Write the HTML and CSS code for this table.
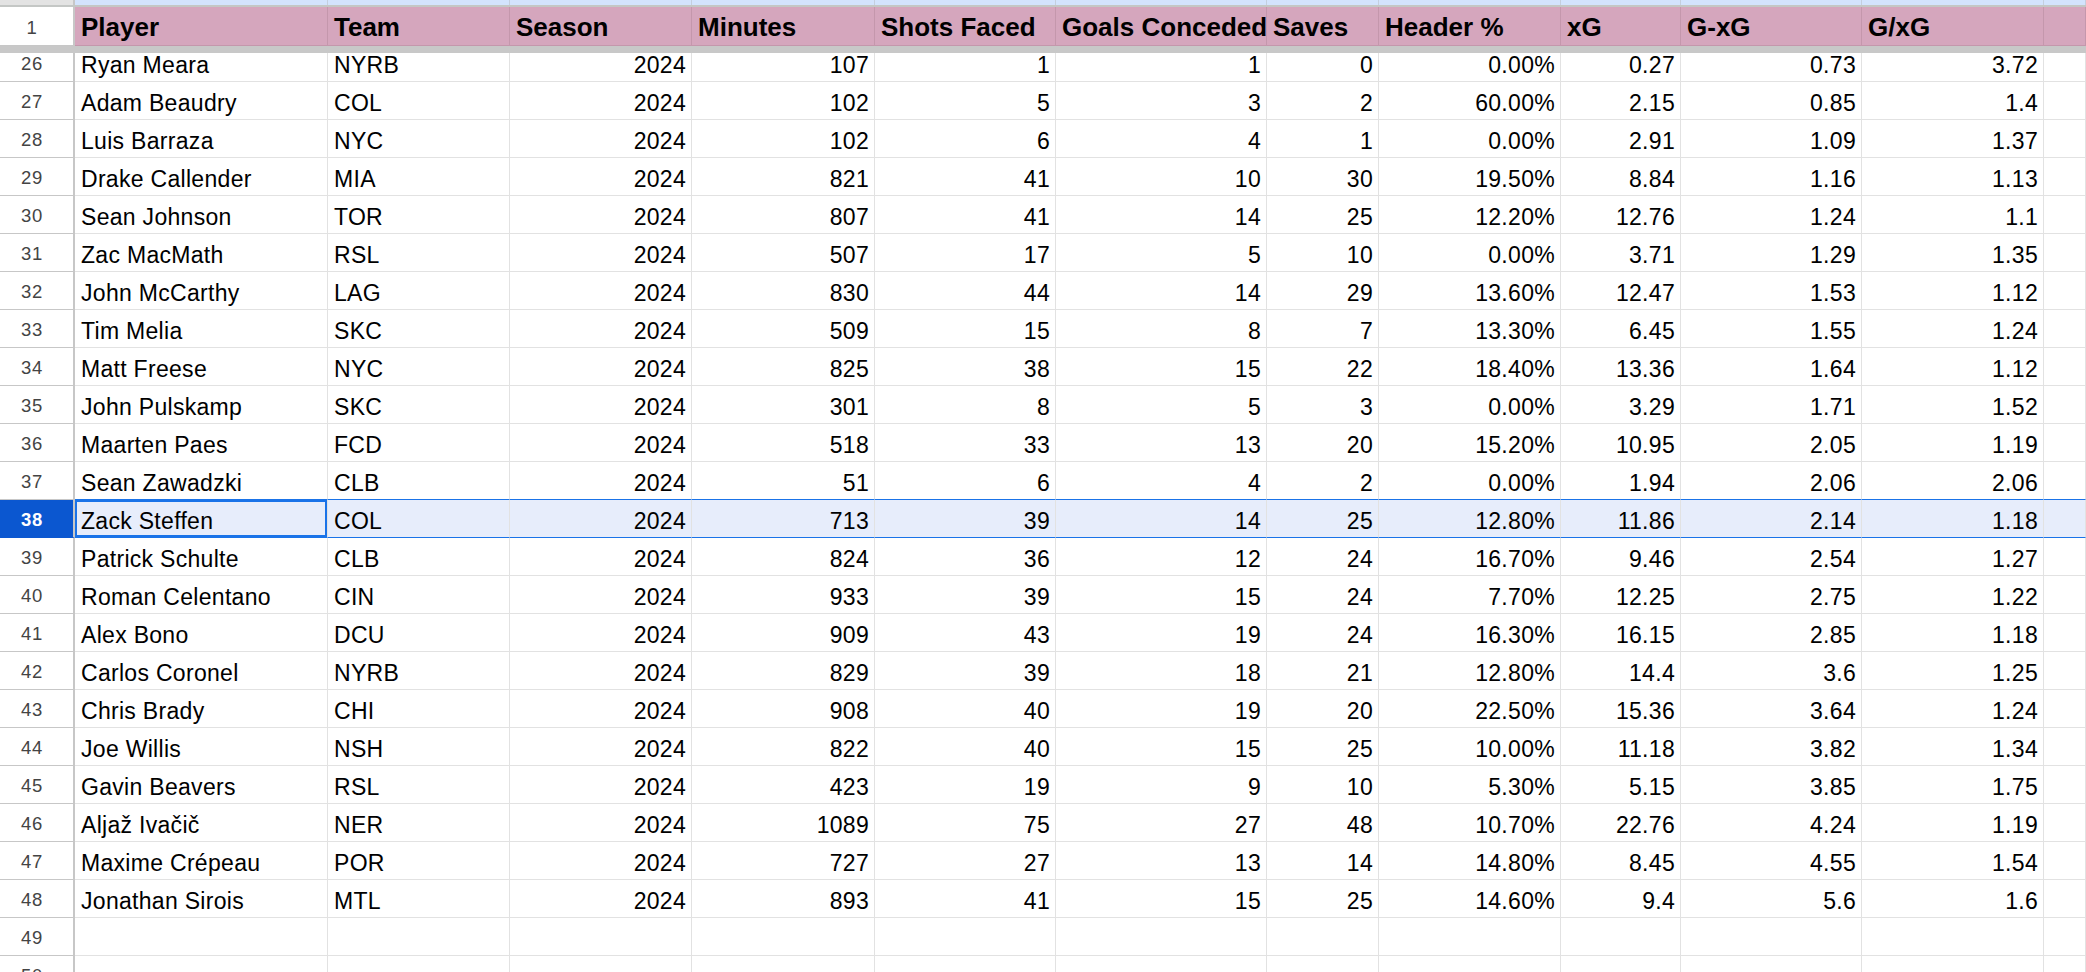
FILE: index.html
```html
<!DOCTYPE html>
<html>
<head>
<meta charset="utf-8">
<link rel="stylesheet" href="styles.css">
</head>
<body>
<div class="sheet">
  <div class="strip">
    <div class="corner"></div><div></div><div></div><div></div><div></div><div></div><div></div><div></div><div></div><div></div><div></div><div></div><div></div>
  </div>
  <div class="hdr">
    <div class="rh">1</div>
    <div class="h">Player</div>
    <div class="h">Team</div>
    <div class="h">Season</div>
    <div class="h">Minutes</div>
    <div class="h">Shots Faced</div>
    <div class="h">Goals Conceded</div>
    <div class="h">Saves</div>
    <div class="h">Header %</div>
    <div class="h">xG</div>
    <div class="h">G-xG</div>
    <div class="h">G/xG</div>
    <div class="h"></div>
  </div>
  <div class="freeze"></div>
  <div class="viewport">
    <div class="rows">
      <div class="row"><div class="rh">26</div><div class="c">Ryan Meara</div><div class="c">NYRB</div><div class="c n">2024</div><div class="c n">107</div><div class="c n">1</div><div class="c n">1</div><div class="c n">0</div><div class="c n">0.00%</div><div class="c n">0.27</div><div class="c n">0.73</div><div class="c n">3.72</div><div class="c"></div></div>
      <div class="row"><div class="rh">27</div><div class="c">Adam Beaudry</div><div class="c">COL</div><div class="c n">2024</div><div class="c n">102</div><div class="c n">5</div><div class="c n">3</div><div class="c n">2</div><div class="c n">60.00%</div><div class="c n">2.15</div><div class="c n">0.85</div><div class="c n">1.4</div><div class="c"></div></div>
      <div class="row"><div class="rh">28</div><div class="c">Luis Barraza</div><div class="c">NYC</div><div class="c n">2024</div><div class="c n">102</div><div class="c n">6</div><div class="c n">4</div><div class="c n">1</div><div class="c n">0.00%</div><div class="c n">2.91</div><div class="c n">1.09</div><div class="c n">1.37</div><div class="c"></div></div>
      <div class="row"><div class="rh">29</div><div class="c">Drake Callender</div><div class="c">MIA</div><div class="c n">2024</div><div class="c n">821</div><div class="c n">41</div><div class="c n">10</div><div class="c n">30</div><div class="c n">19.50%</div><div class="c n">8.84</div><div class="c n">1.16</div><div class="c n">1.13</div><div class="c"></div></div>
      <div class="row"><div class="rh">30</div><div class="c">Sean Johnson</div><div class="c">TOR</div><div class="c n">2024</div><div class="c n">807</div><div class="c n">41</div><div class="c n">14</div><div class="c n">25</div><div class="c n">12.20%</div><div class="c n">12.76</div><div class="c n">1.24</div><div class="c n">1.1</div><div class="c"></div></div>
      <div class="row"><div class="rh">31</div><div class="c">Zac MacMath</div><div class="c">RSL</div><div class="c n">2024</div><div class="c n">507</div><div class="c n">17</div><div class="c n">5</div><div class="c n">10</div><div class="c n">0.00%</div><div class="c n">3.71</div><div class="c n">1.29</div><div class="c n">1.35</div><div class="c"></div></div>
      <div class="row"><div class="rh">32</div><div class="c">John McCarthy</div><div class="c">LAG</div><div class="c n">2024</div><div class="c n">830</div><div class="c n">44</div><div class="c n">14</div><div class="c n">29</div><div class="c n">13.60%</div><div class="c n">12.47</div><div class="c n">1.53</div><div class="c n">1.12</div><div class="c"></div></div>
      <div class="row"><div class="rh">33</div><div class="c">Tim Melia</div><div class="c">SKC</div><div class="c n">2024</div><div class="c n">509</div><div class="c n">15</div><div class="c n">8</div><div class="c n">7</div><div class="c n">13.30%</div><div class="c n">6.45</div><div class="c n">1.55</div><div class="c n">1.24</div><div class="c"></div></div>
      <div class="row"><div class="rh">34</div><div class="c">Matt Freese</div><div class="c">NYC</div><div class="c n">2024</div><div class="c n">825</div><div class="c n">38</div><div class="c n">15</div><div class="c n">22</div><div class="c n">18.40%</div><div class="c n">13.36</div><div class="c n">1.64</div><div class="c n">1.12</div><div class="c"></div></div>
      <div class="row"><div class="rh">35</div><div class="c">John Pulskamp</div><div class="c">SKC</div><div class="c n">2024</div><div class="c n">301</div><div class="c n">8</div><div class="c n">5</div><div class="c n">3</div><div class="c n">0.00%</div><div class="c n">3.29</div><div class="c n">1.71</div><div class="c n">1.52</div><div class="c"></div></div>
      <div class="row"><div class="rh">36</div><div class="c">Maarten Paes</div><div class="c">FCD</div><div class="c n">2024</div><div class="c n">518</div><div class="c n">33</div><div class="c n">13</div><div class="c n">20</div><div class="c n">15.20%</div><div class="c n">10.95</div><div class="c n">2.05</div><div class="c n">1.19</div><div class="c"></div></div>
      <div class="row above-sel"><div class="rh">37</div><div class="c">Sean Zawadzki</div><div class="c">CLB</div><div class="c n">2024</div><div class="c n">51</div><div class="c n">6</div><div class="c n">4</div><div class="c n">2</div><div class="c n">0.00%</div><div class="c n">1.94</div><div class="c n">2.06</div><div class="c n">2.06</div><div class="c"></div></div>
      <div class="row sel"><div class="rh">38</div><div class="c active">Zack Steffen</div><div class="c">COL</div><div class="c n">2024</div><div class="c n">713</div><div class="c n">39</div><div class="c n">14</div><div class="c n">25</div><div class="c n">12.80%</div><div class="c n">11.86</div><div class="c n">2.14</div><div class="c n">1.18</div><div class="c"></div></div>
      <div class="row"><div class="rh">39</div><div class="c">Patrick Schulte</div><div class="c">CLB</div><div class="c n">2024</div><div class="c n">824</div><div class="c n">36</div><div class="c n">12</div><div class="c n">24</div><div class="c n">16.70%</div><div class="c n">9.46</div><div class="c n">2.54</div><div class="c n">1.27</div><div class="c"></div></div>
      <div class="row"><div class="rh">40</div><div class="c">Roman Celentano</div><div class="c">CIN</div><div class="c n">2024</div><div class="c n">933</div><div class="c n">39</div><div class="c n">15</div><div class="c n">24</div><div class="c n">7.70%</div><div class="c n">12.25</div><div class="c n">2.75</div><div class="c n">1.22</div><div class="c"></div></div>
      <div class="row"><div class="rh">41</div><div class="c">Alex Bono</div><div class="c">DCU</div><div class="c n">2024</div><div class="c n">909</div><div class="c n">43</div><div class="c n">19</div><div class="c n">24</div><div class="c n">16.30%</div><div class="c n">16.15</div><div class="c n">2.85</div><div class="c n">1.18</div><div class="c"></div></div>
      <div class="row"><div class="rh">42</div><div class="c">Carlos Coronel</div><div class="c">NYRB</div><div class="c n">2024</div><div class="c n">829</div><div class="c n">39</div><div class="c n">18</div><div class="c n">21</div><div class="c n">12.80%</div><div class="c n">14.4</div><div class="c n">3.6</div><div class="c n">1.25</div><div class="c"></div></div>
      <div class="row"><div class="rh">43</div><div class="c">Chris Brady</div><div class="c">CHI</div><div class="c n">2024</div><div class="c n">908</div><div class="c n">40</div><div class="c n">19</div><div class="c n">20</div><div class="c n">22.50%</div><div class="c n">15.36</div><div class="c n">3.64</div><div class="c n">1.24</div><div class="c"></div></div>
      <div class="row"><div class="rh">44</div><div class="c">Joe Willis</div><div class="c">NSH</div><div class="c n">2024</div><div class="c n">822</div><div class="c n">40</div><div class="c n">15</div><div class="c n">25</div><div class="c n">10.00%</div><div class="c n">11.18</div><div class="c n">3.82</div><div class="c n">1.34</div><div class="c"></div></div>
      <div class="row"><div class="rh">45</div><div class="c">Gavin Beavers</div><div class="c">RSL</div><div class="c n">2024</div><div class="c n">423</div><div class="c n">19</div><div class="c n">9</div><div class="c n">10</div><div class="c n">5.30%</div><div class="c n">5.15</div><div class="c n">3.85</div><div class="c n">1.75</div><div class="c"></div></div>
      <div class="row"><div class="rh">46</div><div class="c">Aljaž Ivačič</div><div class="c">NER</div><div class="c n">2024</div><div class="c n">1089</div><div class="c n">75</div><div class="c n">27</div><div class="c n">48</div><div class="c n">10.70%</div><div class="c n">22.76</div><div class="c n">4.24</div><div class="c n">1.19</div><div class="c"></div></div>
      <div class="row"><div class="rh">47</div><div class="c">Maxime Crépeau</div><div class="c">POR</div><div class="c n">2024</div><div class="c n">727</div><div class="c n">27</div><div class="c n">13</div><div class="c n">14</div><div class="c n">14.80%</div><div class="c n">8.45</div><div class="c n">4.55</div><div class="c n">1.54</div><div class="c"></div></div>
      <div class="row"><div class="rh">48</div><div class="c">Jonathan Sirois</div><div class="c">MTL</div><div class="c n">2024</div><div class="c n">893</div><div class="c n">41</div><div class="c n">15</div><div class="c n">25</div><div class="c n">14.60%</div><div class="c n">9.4</div><div class="c n">5.6</div><div class="c n">1.6</div><div class="c"></div></div>
      <div class="row"><div class="rh">49</div><div class="c"></div><div class="c"></div><div class="c"></div><div class="c"></div><div class="c"></div><div class="c"></div><div class="c"></div><div class="c"></div><div class="c"></div><div class="c"></div><div class="c"></div><div class="c"></div></div>
      <div class="row"><div class="rh">50</div><div class="c"></div><div class="c"></div><div class="c"></div><div class="c"></div><div class="c"></div><div class="c"></div><div class="c"></div><div class="c"></div><div class="c"></div><div class="c"></div><div class="c"></div><div class="c"></div></div>
    </div>
  </div>
</div>
</body>
</html>
```
FILE: styles.css
```css
:root {
  --cols: 75px 253px 182px 182px 183px 181px 211px 112px 182px 120px 181px 182px 1fr;
  --grid: #e2e2e2;
  --rhline: #c7c7c7;
}
html, body {
  margin: 0;
  padding: 0;
}
body {
  width: 2086px;
  height: 972px;
  overflow: hidden;
  background: #fff;
  color: #000;
  font-family: "Liberation Sans", Arial, sans-serif;
}
.sheet {
  display: flex;
  flex-direction: column;
  height: 972px;
}
.strip {
  display: grid;
  grid-template-columns: var(--cols);
  height: 7px;
  box-sizing: border-box;
  border-bottom: 2px solid #c4c7c5;
  flex: none;
}
.strip div {
  background: #d3e3fd;
  border-right: 1px solid #c4cede;
}
.strip .corner {
  background: #e3e3e3;
  border-right: 2px solid var(--rhline);
}
.hdr {
  display: grid;
  grid-template-columns: var(--cols);
  height: 39px;
  flex: none;
}
.rh {
  box-sizing: border-box;
  border-right: 2px solid var(--rhline);
  border-bottom: 1px solid var(--rhline);
  background: #fff;
  color: #444;
  font-size: 18.5px;
  display: flex;
  align-items: center;
  justify-content: center;
  padding: 3px 9px 0 0;
  letter-spacing: 0.6px;
}
.h {
  box-sizing: border-box;
  background: #d5a6bd;
  border-right: 1px solid #c497ac;
  border-bottom: 1px solid #c497ac;
  font-weight: bold;
  font-size: 26px;
  line-height: 28px;
  padding: 0 2px 4px 6px;
  display: flex;
  align-items: flex-end;
  white-space: nowrap;
  overflow: hidden;
}
.freeze {
  height: 7px;
  background: #c8c8c8;
  flex: none;
}
.viewport {
  flex: 1;
  overflow: hidden;
}
.rows {
  margin-top: -9px;
}
.row {
  display: grid;
  grid-template-columns: var(--cols);
  height: 38px;
}
.c {
  box-sizing: border-box;
  border-right: 1px solid var(--grid);
  border-bottom: 1px solid var(--grid);
  font-size: 23px;
  line-height: 25px;
  letter-spacing: 0.3px;
  padding: 0 5px 3px 6px;
  display: flex;
  align-items: flex-end;
  white-space: nowrap;
  overflow: hidden;
}
.c.n {
  justify-content: flex-end;
}
.above-sel .c {
  border-bottom-color: #1a73e8;
}
.sel .c {
  background: #e7edfb;
  border-bottom-color: #1a73e8;
}
.sel .rh {
  background: #0b57d0;
  color: #fff;
  font-weight: bold;
  border-bottom-color: #0b57d0;
}
.sel .c.active {
  background: #e7edfb;
  box-shadow: inset 0 0 0 2px #1a73e8;
}
```
